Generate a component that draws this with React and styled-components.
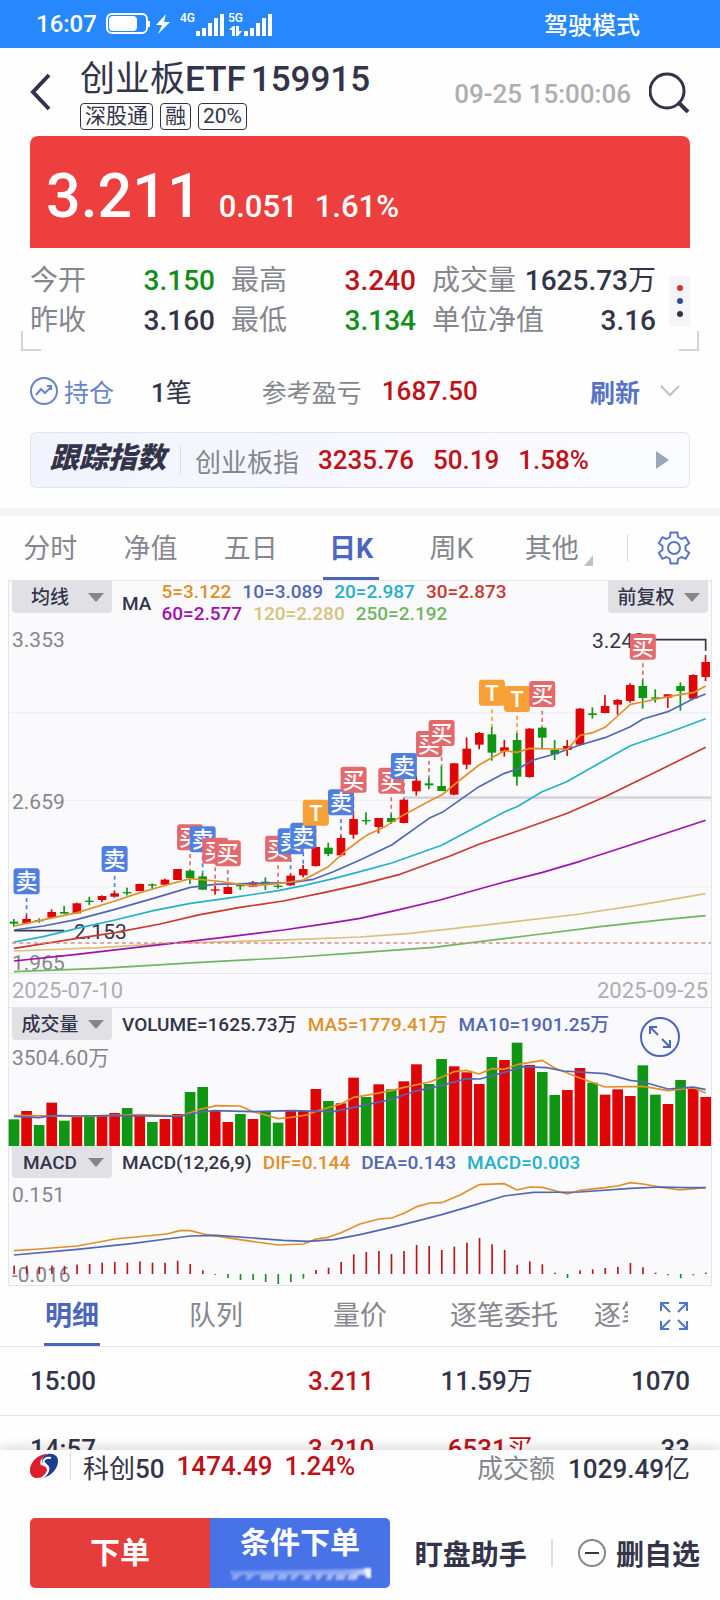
import styled, { createGlobalStyle } from "styled-components";

const COLORS = {
  dark: "#33344a",
  grey: "#85868e",
  light: "#adaeb4",
  red: "#c01018",
  green: "#0f8f18",
  link: "#4c66bd",
  line: "#e4e5ea",
  up: "#df0406",
  down: "#0f9612",
};

const MA_COLORS = {
  orange: "#e0902a",
  blue: "#5167b4",
  cyan: "#25b0cc",
  red: "#c8392f",
  purple: "#9f12b0",
  tan: "#d6c27c",
  green: "#72b560",
};

const GlobalStyle = createGlobalStyle`
  * {
    box-sizing: border-box;
  }
  body {
    margin: 0;
    background: #fefefe;
    color: ${COLORS.dark};
    font-family: Roboto, "Noto Sans CJK SC", sans-serif;
    font-weight: 500;
  }
  button, select {
    font: inherit;
    color: inherit;
    border: 0;
    padding: 0;
    background: none;
  }
  svg {
    display: block;
    flex-shrink: 0;
  }
`;

const Page = styled.main`
  display: flex;
  flex-direction: column;
  height: 100vh;
  overflow: hidden;
  & > * {
    flex-shrink: 0;
  }
`;

const Regular = styled.span`
  font-weight: 400;
`;

const StatusBar = styled.div`
  display: flex;
  align-items: center;
  justify-content: space-between;
  height: 48px;
  padding: 0 80px 2px 36px;
  background: #2688fc;
  color: #fff;
  font-size: 24px;
`;

const StatusGroup = styled.div`
  display: flex;
  align-items: center;
  gap: 8px;
  padding-top: 2px;
`;

const Header = styled.header`
  display: flex;
  align-items: center;
  height: 88px;
  padding: 0 30px;
`;

const IconButton = styled.button`
  display: grid;
  place-items: center;
  flex-shrink: 0;
`;

const TitleBlock = styled.div`
  flex: 1;
  padding: 2px 0 0 29px;
`;

const Title = styled.h1`
  display: flex;
  gap: 5px;
  margin: 0;
  font-size: 35px;
  line-height: 46px;
  font-weight: 500;
  white-space: nowrap;
`;

const Tags = styled.div`
  display: flex;
  gap: 7px;
`;

const Tag = styled.span`
  border: 1px solid ${COLORS.dark};
  border-radius: 4px;
  padding: 0 4px;
  font-size: 21px;
  line-height: 25px;
  font-weight: 400;
`;

const Timestamp = styled.time`
  margin-right: 18px;
  padding-top: 3px;
  color: ${COLORS.light};
  font-size: 26px;
`;

const PriceCard = styled.section`
  display: flex;
  align-items: baseline;
  gap: 17px;
  height: 112px;
  margin: 0 30px;
  padding: 24px 16px 0;
  border-radius: 8px 8px 0 0;
  background: #ed3f3e;
  color: #fff;
  font-size: 31px;
`;

const Price = styled.strong`
  font-size: 61px;
  line-height: 72px;
  font-weight: 500;
`;

const Stats = styled.section`
  position: relative;
  display: flex;
  align-items: center;
  gap: 13px;
  height: 103px;
  margin: 0 21px;
  padding: 13px 9px 10px;
  &::before,
  &::after {
    content: "";
    position: absolute;
    bottom: 0;
    width: 18px;
    height: 18px;
    border-bottom: 2px solid #d3d3d8;
  }
  &::before {
    left: 0;
    border-left: 2px solid #d3d3d8;
  }
  &::after {
    right: 0;
    border-right: 2px solid #d3d3d8;
  }
`;

const StatGrid = styled.dl`
  display: grid;
  flex: 1;
  grid-template-columns: 185fr 185fr 224fr;
  column-gap: 16px;
  margin: 0;
  font-size: 28px;
  line-height: 40px;
`;

const Stat = styled.div`
  display: flex;
  justify-content: space-between;
  white-space: nowrap;
  dt {
    color: ${COLORS.grey};
    font-weight: 400;
  }
  dd {
    margin: 0;
    color: ${(props) => props.$color || COLORS.dark};
  }
`;

const MoreButton = styled.button`
  display: grid;
  align-content: center;
  justify-items: center;
  gap: 7px;
  width: 21px;
  height: 50px;
  background: #f5f5f8;
`;

const Dot = styled.span`
  width: 6px;
  height: 6px;
  border-radius: 50%;
  background: ${(props) => props.$color};
`;

const Holding = styled.section`
  display: flex;
  align-items: center;
  height: 81px;
  padding: 0 40px 2px 30px;
  font-size: 26px;
  white-space: nowrap;
`;

const HoldingLink = styled.a`
  display: flex;
  align-items: center;
  gap: 6px;
  color: #6a84cb;
  font-size: 25px;
  font-weight: 400;
  text-decoration: none;
`;

const HoldingCount = styled.span`
  margin: 0 70px 0 37px;
`;

const Muted = styled.span`
  color: ${COLORS.grey};
  font-size: ${(props) => props.$size || 25}px;
  font-weight: 400;
`;

const Profit = styled.span`
  flex: 1;
  margin-left: 20px;
  color: ${COLORS.red};
`;

const RefreshButton = styled.button`
  display: flex;
  align-items: center;
  gap: 20px;
  color: #5872c6;
  font-size: 25px;
  font-weight: 700;
`;

const IndexLink = styled.a`
  display: flex;
  align-items: center;
  height: 56px;
  margin: 0 30px 20px;
  padding: 0 20px 0 19px;
  border: 1px solid #dfe4f0;
  border-radius: 6px;
  background: linear-gradient(90deg, #f1f4fd, #fbfcff);
  color: ${COLORS.red};
  font-size: 26px;
  text-decoration: none;
  white-space: nowrap;
`;

const IndexTag = styled.strong`
  color: ${COLORS.dark};
  font-size: 29px;
  line-height: 50px;
  padding-bottom: 4px;
  font-weight: 900;
  font-style: italic;
`;

const Divider = styled.span`
  width: ${(props) => props.$width || 1}px;
  height: 28px;
  margin: ${(props) => props.$margin || "0 14px"};
  flex-shrink: 0;
  background: #dcdde2;
`;

const IndexValues = styled.span`
  display: flex;
  flex: 1;
  gap: 19px;
  margin-left: 19px;
`;

const Band = styled.div`
  height: 8px;
  background: #f5f5f6;
`;

const Tabs = styled.nav`
  display: flex;
  align-items: center;
  height: ${(props) => props.$height}px;
  border-bottom: ${(props) => (props.$line ? `1px solid ${COLORS.line}` : 0)};
`;

const TabList = styled.div`
  display: flex;
  flex: 1;
  height: 100%;
  overflow: hidden;
`;

const Tab = styled.button`
  position: relative;
  flex: ${(props) => (props.$basis ? `0 0 ${props.$basis}` : 1)};
  height: 100%;
  padding-bottom: ${(props) => (props.$basis ? 6 : 4)}px;
  color: ${(props) => (props.$active ? COLORS.link : COLORS.grey)};
  font-size: 27px;
  font-weight: ${(props) => (props.$active ? 700 : 400)};
  white-space: nowrap;
  &::after {
    content: "";
    display: ${(props) => (props.$active ? "block" : "none")};
    position: absolute;
    left: 50%;
    bottom: 0;
    width: 56px;
    height: 3px;
    margin-left: -28px;
    background: ${COLORS.link};
  }
`;

const Corner = styled.span`
  position: absolute;
  right: 9px;
  bottom: 14px;
  border-left: 9px solid transparent;
  border-bottom: 11px solid #c2c2c6;
`;

const TabAction = styled(IconButton)`
  width: 92px;
`;

const Chart = styled.section`
  margin: 0 8px;
  border: 1px solid ${COLORS.line};
  background: #fafafc;
`;

const Panel = styled.div`
  position: relative;
  border-top: ${(props) => (props.$line ? `1px solid ${COLORS.line}` : 0)};
`;

const PanelHead = styled.div`
  display: flex;
  align-items: center;
  height: ${(props) => props.$height || 33}px;
  padding: 0 3px;
  gap: 10px;
  font-size: 19px;
  white-space: nowrap;
`;

const Picker = styled.label`
  display: grid;
  align-self: flex-start;
  align-items: center;
  width: 100px;
  height: 32px;
  border-radius: 0 0 4px 4px;
  background: #e1e1e5;
  & > * {
    grid-area: 1 / 1;
  }
  select {
    width: 100%;
    height: 100%;
    padding: 0 24px 0 0;
    appearance: none;
    text-align: center;
    text-align-last: center;
  }
  svg {
    justify-self: end;
    margin-right: 8px;
    pointer-events: none;
  }
`;

const Legend = styled.div`
  display: flex;
  flex: 1;
  flex-wrap: wrap;
  column-gap: 11px;
  line-height: 22px;
`;

const MaLegend = styled(Legend)`
  padding-right: 90px;
`;

const LegendItem = styled.span`
  color: ${(props) => props.$color || COLORS.dark};
`;

const Spacer = styled.span`
  flex: 1;
`;

const Plot = styled.svg`
  width: 100%;
  height: auto;
  overflow: visible;
  text {
    font-size: 21px;
    font-weight: 400;
    fill: ${COLORS.grey};
  }
  .mark {
    font-size: 22px;
    font-weight: 500;
    fill: #fff;
    text-anchor: middle;
  }
  .peak {
    fill: ${COLORS.dark};
  }
`;

const DateAxis = styled.div`
  display: flex;
  justify-content: space-between;
  padding: 0 3px;
  border-top: 1px solid ${COLORS.line};
  color: ${COLORS.light};
  font-size: 22px;
  line-height: 33px;
  font-weight: 400;
`;

const ExpandButton = styled(IconButton)`
  position: absolute;
  top: 9px;
  right: 31px;
  width: 40px;
  height: 40px;
  border: 2px solid ${COLORS.link};
  border-radius: 50%;
`;

const TradeArea = styled.div`
  flex: 1 1 0;
  min-height: 0;
  overflow: hidden;
`;

const TradeTable = styled.table`
  width: 100%;
  border-collapse: collapse;
  table-layout: fixed;
  font-size: 26px;
  td {
    height: 68px;
    padding: 0;
    border-bottom: 1px solid ${COLORS.line};
    line-height: 30px;
    text-align: right;
  }
  td:first-child {
    width: 25%;
    padding-left: 30px;
    text-align: left;
  }
  td:nth-child(2) {
    width: 27%;
    color: ${COLORS.red};
  }
  td:nth-child(3) {
    width: 22%;
  }
  td:last-child {
    padding-right: 30px;
  }
`;

const Volume = styled.td`
  color: ${(props) => (props.$buy ? COLORS.red : COLORS.dark)};
`;

const Footer = styled.footer`
  position: relative;
  height: 150px;
  background: #fefefe;
  box-shadow: 0 -4px 10px rgba(0, 0, 0, 0.12);
`;

const Ticker = styled.div`
  display: flex;
  align-items: center;
  height: 32px;
  padding: 0 30px;
  font-size: 26px;
  white-space: nowrap;
`;

const TickerValue = styled.span`
  margin-left: 12px;
  color: ${COLORS.red};
`;

const Turnover = styled.span`
  margin-left: 13px;
`;

const Actions = styled.div`
  display: flex;
  align-items: center;
  justify-content: space-between;
  padding: 36px 20px 0 30px;
`;

const OrderButtons = styled.div`
  display: flex;
  flex: 0 0 50vw;
  height: 70px;
  border-radius: 5px;
  overflow: hidden;
`;

const OrderButton = styled.button`
  display: flex;
  flex: 1 1 0;
  flex-direction: column;
  align-items: center;
  justify-content: center;
  gap: 4px;
  background: ${(props) => props.$color};
  color: #fff;
  font-size: 30px;
  line-height: 38px;
  font-weight: 700;
`;

const TextButton = styled.button`
  display: flex;
  align-items: center;
  gap: 9px;
  font-size: 28px;
  font-weight: 700;
  white-space: nowrap;
`;

const STATS = [
  { label: "今开", value: "3.150", color: COLORS.green },
  { label: "最高", value: "3.240", color: COLORS.red },
  { label: "成交量", value: "1625.73", unit: "万" },
  { label: "昨收", value: "3.160" },
  { label: "最低", value: "3.134", color: COLORS.green },
  { label: "单位净值", value: "3.16" },
];

const PERIODS = ["分时", "净值", "五日", "日K", "周K", "其他"];
const DETAILS = ["明细", "队列", "量价", "逐笔委托", "逐笔成交"];

const MA_LEGEND = [
  ["5=3.122", MA_COLORS.orange],
  ["10=3.089", MA_COLORS.blue],
  ["20=2.987", MA_COLORS.cyan],
  ["30=2.873", MA_COLORS.red],
  ["60=2.577", MA_COLORS.purple],
  ["120=2.280", MA_COLORS.tan],
  ["250=2.192", MA_COLORS.green],
];

const TRADES = [
  { time: "15:00", price: "3.211", volume: "11.59", unit: "万", count: "1070" },
  { time: "14:57", price: "3.210", volume: "6531", unit: "买", count: "33", buy: true },
];

// r = rising, g = falling, one letter per trading day
const DAYS = "grgrgrgrrgrgrrggrrgrggrrrgrrgrgrrggrrrgrgrggrrgrrrggrgrr";

// body top, body bottom, high, low in chart units (3 units per pixel)
const CANDLES = [
  [905, 911, 897, 920], [897, 910, 884, 912], [900, 904, 895, 908], [876, 893, 868, 895],
  [876, 881, 858, 882], [850, 880, 848, 882], [842, 846, 830, 855], [828, 840, 826, 846],
  [820, 830, 812, 833], [816, 820, 803, 826], [792, 813, 791, 813], [793, 797, 790, 806],
  [779, 794, 776, 794], [747, 780, 747, 780], [752, 774, 750, 792], [769, 809, 758, 810],
  [808, 812, 798, 824], [801, 822, 801, 822], [795, 799, 790, 810], [787, 800, 783, 800],
  [785, 789, 772, 810], [797, 801, 790, 806], [767, 796, 760, 798], [747, 766, 735, 772],
  [681, 738, 681, 740], [683, 702, 668, 708], [654, 706, 646, 710], [597, 644, 584, 656],
  [600, 604, 577, 614], [594, 621, 594, 640], [594, 606, 582, 612], [539, 609, 537, 610],
  [482, 514, 468, 527], [490, 496, 472, 508], [498, 513, 437, 513], [430, 524, 429, 526],
  [386, 434, 352, 448], [339, 374, 336, 388], [343, 398, 320, 422], [382, 394, 360, 410],
  [360, 470, 338, 497], [326, 471, 324, 473], [323, 353, 320, 388], [390, 403, 360, 420],
  [378, 390, 360, 408], [266, 374, 264, 378], [280, 285, 262, 296], [258, 279, 225, 280],
  [240, 254, 237, 284], [195, 243, 190, 248], [198, 234, 180, 266], [232, 236, 208, 248],
  [223, 233, 222, 264], [198, 213, 187, 272], [165, 236, 163, 238], [126, 171, 105, 183],
];

const MARKS = [
  [1, "卖", 784], [8, "卖", 717], [14, "买", 652], [15, "卖", 658], [16, "买", 692],
  [17, "买", 700], [21, "买", 686], [22, "卖", 664], [23, "卖", 647], [24, "T", 578],
  [26, "卖", 547], [27, "买", 479], [30, "买", 482], [31, "卖", 438], [33, "买", 372],
  [34, "买", 339], [38, "T", 218], [40, "T", 237], [42, "买", 222], [50, "买", 80],
];

const MARK_COLORS = { 买: "#e4696c", 卖: "#4f7fe0", T: "#f6a035" };

const PRICE_LINES = [
  ["green", "42,1055 300,1045 600,1027 850,1014 1080,998 1300,982 1600,945 1800,920 2000,898 2117,887"],
  ["tan", "42,993 300,983 500,970 720,964 900,958 1080,951 1230,940 1500,910 1740,882 1930,853 2117,821"],
  ["purple", "42,1023 230,1003 430,980 646,955 850,930 1000,908 1080,895 1185,872 1320,840 1513,786 1625,758 1740,724 1891,675 2117,601"],
  ["red", "42,985 232,955 345,938 480,912 600,884 720,862 850,843 985,815 1080,794 1200,763 1350,708 1437,673 1551,634 1702,580 1815,530 1929,475 2117,382"],
  ["cyan", "42,966 130,950 232,925 345,900 460,872 571,850 700,832 835,812 910,797 1000,776 1080,755 1175,729 1325,676 1400,636 1513,576 1551,560 1625,516 1700,485 1815,420 1891,377 2004,338 2117,296"],
  ["blue", "42,930 130,918 232,898 345,868 460,835 571,802 646,793 760,790 872,788 940,778 1000,755 1080,720 1175,675 1287,595 1330,575 1437,500 1513,460 1551,448 1600,420 1664,402 1740,375 1815,353 1891,320 1929,297 2004,275 2080,236 2117,222"],
  ["orange", "42,918 118,902 232,878 345,843 420,818 500,795 571,776 650,783 720,793 760,797 835,791 910,780 985,740 1040,690 1080,660 1100,646 1155,620 1212,584 1287,544 1325,525 1380,480 1437,435 1513,392 1551,397 1589,385 1664,387 1702,388 1740,346 1778,338 1815,322 1853,288 1891,253 1929,246 2004,230 2080,218 2117,198"],
];

const VOLUMES = [
  358, 333, 375, 308, 362, 350, 350, 346, 339, 324, 346, 366, 357, 342, 276, 261, 333, 366, 342,
  357, 336, 368, 331, 333, 267, 303, 310, 233, 291, 253, 268, 244, 193, 252, 177, 199, 217, 252,
  171, 180, 128, 195, 216, 285, 270, 204, 248, 284, 268, 288, 196, 284, 312, 240, 265, 291,
];

const VOLUME_LINES = [
  ["orange", "42,346 232,349 420,344 540,348 600,328 650,317 720,318 760,335 835,356 872,352 920,345 960,330 1023,312 1061,292 1110,284 1175,272 1212,262 1290,246 1362,215 1400,211 1437,222 1475,206 1513,208 1551,194 1627,181 1664,204 1740,234 1815,261 1930,259 2004,272 2080,263 2117,279"],
  ["blue", "42,349 118,353 160,346 232,348 345,347 540,349 571,342 640,332 760,335 872,332 1000,335 1061,322 1110,312 1175,298 1240,275 1325,256 1400,236 1440,237 1513,217 1570,200 1640,203 1690,213 1815,221 1891,241 1930,246 2004,267 2080,261 2117,269"],
];

const MACD_ZERO = 822;
const MACD = [
  797, 797, 800, 797, 798, 794, 792, 788, 786, 788, 784, 788, 788, 782, 792, 811, 825, 834, 840,
  840, 846, 852, 846, 836, 810, 803, 786, 763, 756, 753, 762, 753, 735, 738, 750, 740, 728, 714,
  733, 750, 795, 784, 793, 818, 834, 811, 808, 804, 801, 789, 802, 818, 826, 835, 826, 818,
];

const MACD_LINES = [
  ["orange", "42,752 118,747 232,738 345,717 500,702 540,692 571,692 610,702 680,713 760,725 835,735 910,732 948,717 985,712 1023,698 1080,672 1137,657 1175,654 1212,640 1250,620 1290,609 1325,608 1380,585 1437,554 1513,551 1551,570 1589,561 1627,562 1702,582 1740,571 1815,563 1853,558 1891,548 1929,552 1985,562 2040,570 2117,563"],
  ["blue", "42,765 232,748 400,730 500,717 571,708 650,706 760,714 850,721 925,724 1000,719 1080,704 1200,676 1325,644 1400,622 1513,588 1600,577 1740,576 1891,565 1985,561 2050,563 2117,563"],
];

const UNIT = "scale(0.33333)";
const dayX = (i) => 42 + i * 37.73;
const dayColor = (i) => (DAYS[i] === "r" ? COLORS.up : COLORS.down);

function Lines({ data }) {
  return data.map(([color, points]) => (
    <polyline
      key={color}
      points={points}
      fill="none"
      stroke={MA_COLORS[color]}
      strokeWidth="5"
      strokeLinejoin="round"
    />
  ));
}

function PricePlot() {
  return (
    <Plot viewBox="9 5 702 348" role="img" aria-label="日K">
      <g transform={UNIT}>
        <path d="M27 278H2133M27 541H2133M27 801H2133" stroke="#eeeef2" strokeWidth="3" />
        <path d="M1212 533H2133" stroke="#d6d6da" strokeWidth="8" />
      </g>
      <text x="12" y="27">3.353</text>
      <text x="12" y="189">2.659</text>
      <text x="12" y="350">1.965</text>
      <text x="74" y="319" className="peak">2.153</text>
      <text x="592" y="28" className="peak">3.240</text>
      <g transform={UNIT}>
        <path d="M42 932H192M1965 59H2117V92" fill="none" stroke={COLORS.dark} strokeWidth="5" />
        {CANDLES.map(([top, bottom, high, low], i) => (
          <g key={i} fill={dayColor(i)}>
            <rect x={dayX(i) - 13} y={top} width="26" height={bottom - top} />
            <rect x={dayX(i) - 3} y={high} width="5" height={low - high} />
          </g>
        ))}
        <Lines data={PRICE_LINES} />
        <path d="M36 969H2133" stroke="#d68f86" strokeWidth="4" strokeDasharray="12 10" />
        {MARKS.map(([i, type, y]) => (
          <path
            key={i}
            d={`M${dayX(i)} ${y + 50}V${Math.max(CANDLES[i][2], y + 80)}`}
            stroke={MARK_COLORS[type]}
            strokeWidth="5"
            strokeDasharray="12 10"
          />
        ))}
      </g>
      {MARKS.map(([i, type, y]) => (
        <g key={i} transform={`translate(${dayX(i) / 3} ${y / 3})`}>
          <rect x="-13" y="-13" width="26" height="26" rx="3" fill={MARK_COLORS[type]} />
          <text y="8" className="mark">{type}</text>
        </g>
      ))}
    </Plot>
  );
}

function VolumePlot() {
  return (
    <Plot viewBox="9 41 702 105" role="img" aria-label="成交量">
      <text x="12" y="65">3504.60万</text>
      <g transform={UNIT}>
        {VOLUMES.map((top, i) => (
          <rect key={i} x={dayX(i) - 16} y={top} width="32" height={438 - top} fill={dayColor(i)} />
        ))}
        <Lines data={VOLUME_LINES} />
      </g>
    </Plot>
  );
}

function MacdPlot() {
  return (
    <Plot viewBox="9 179 702 106" role="img" aria-label="MACD">
      <text x="12" y="202">0.151</text>
      <text x="12" y="282">-0.016</text>
      <g transform={UNIT}>
        {MACD.map((value, i) => (
          <rect
            key={i}
            x={dayX(i) - 2}
            y={Math.min(value, MACD_ZERO)}
            width="5"
            height={Math.abs(value - MACD_ZERO)}
            fill={value < MACD_ZERO ? "#b3181c" : "#1d8a2c"}
          />
        ))}
        <Lines data={MACD_LINES} />
      </g>
    </Plot>
  );
}

function Select({ label, options }) {
  return (
    <Picker>
      <select aria-label={label} defaultValue={options[0]}>
        {options.map((option) => (
          <option key={option}>{option}</option>
        ))}
      </select>
      <svg width="16" height="9" viewBox="0 0 16 9">
        <path d="M0 0H16L8 9Z" fill="#85868c" />
      </svg>
    </Picker>
  );
}

function StatusIcons() {
  return (
    <svg width="168" height="26" viewBox="0 0 168 26" fill="#fff">
      <rect x="2" y="3" width="40" height="19" rx="5" fill="none" stroke="#fff" strokeWidth="2" />
      <rect x="4" y="5" width="28" height="15" rx="4" />
      <path d="M43 10H45V16H43ZM61 3L51 14H57L53 23L65 11H59Z" />
      <path d="M91 20h4v5h-4zM97 17h4v8h-4zM103 12h4v13h-4zM109 7h4v18h-4zM115 3h4v22h-4z" />
      <path d="M139 20h4v5h-4zM145 17h4v8h-4zM151 12h4v13h-4zM157 7h4v18h-4zM163 3h4v22h-4z" />
      <path d="M124 19L128 15H130V25H127V19ZM131 15H134V20H137L133 25H131Z" />
      <text x="75" y="11" fontSize="12">4G</text>
      <text x="123" y="11" fontSize="12">5G</text>
    </svg>
  );
}

function GearIcon() {
  return (
    <svg width="34" height="34" viewBox="0 0 34 34" fill="none" stroke="#5876bd" strokeWidth="2" strokeLinejoin="round">
      <path d="M13 6L13.500 1.500H20.500L21 6L24.500 8L28.700 6.200L32.200 12.300L28.500 15V19L32.200 21.700L28.700 27.800L24.500 26L21 28L20.500 32.500H13.500L13 28L9.500 26L5.300 27.800L1.800 21.700L5.500 19V15L1.800 12.300L5.300 6.200L9.500 8Z" />
      <circle cx="17" cy="17" r="6" />
    </svg>
  );
}

function FullscreenIcon() {
  return (
    <svg width="30" height="30" viewBox="0 0 30 30" fill="none" stroke="#4f76c8" strokeWidth="2">
      <path d="M2 10V2H10M2 2L11 11M20 2H28V10M28 2L19 11M2 20V28H10M2 28L11 19M20 28H28V20M28 28L19 19" />
    </svg>
  );
}

function BrandIcon() {
  return (
    <svg width="28" height="26" viewBox="0 0 28 26">
      <path d="M18 1C9 1 2 7 0 15C-1 22 3 25 7 25C12 25 17 22 17 17C17 13 13 13 11 12C9 10 11 4 18 1Z" fill="#dc1d2b" />
      <path d="M18 1C24 0 28 3 28 8C28 16 21 23 13 25C18 22 20 17 17 13C15 11 12 11 12 8C12 4 15 2 18 1Z" fill="#1c3f92" />
      <path d="M21 5C16 4 12 7 14 10C16 12 20 13 18 18C17 21 15 23 12 25" fill="none" stroke="#fff" strokeWidth="2" />
    </svg>
  );
}

function PromoShine() {
  return (
    <svg width="144" height="16" viewBox="0 0 144 16">
      <defs>
        <linearGradient id="shine" x1="0" x2="1">
          <stop offset="0" stopColor="#8aa6f2" />
          <stop offset="0.85" stopColor="#a6bbf6" />
          <stop offset="1" stopColor="#fff" />
        </linearGradient>
        <filter id="soft">
          <feGaussianBlur stdDeviation="0.9" />
        </filter>
      </defs>
      <g fill="url(#shine)" filter="url(#soft)">
        <path d="M2 5L142 3L141 9H3Z" opacity="0.75" />
        <path d="M5 8H14L8 14H4ZM19 8H28L21 14H18ZM33 8H48L45 14H32ZM51 8H60L58 14H49ZM64 8H72L66 14H62ZM76 8H84L82 14H75ZM88 8H96L91 14H88ZM100 8H106L103 14H98ZM109 8H118L116 14H107ZM121 8H131L128 14H119ZM136 2H143V12H138Z" />
      </g>
    </svg>
  );
}

function App() {
  return (
    <Page>
      <GlobalStyle />
      <StatusBar>
        <StatusGroup>
          16:07
          <StatusIcons />
        </StatusGroup>
        <span>驾驶模式</span>
      </StatusBar>
      <Header>
        <IconButton aria-label="返回">
          <svg width="21" height="38" viewBox="0 0 21 38" fill="none" stroke={COLORS.dark} strokeWidth="4">
            <path d="M19 2L3 19L19 36" />
          </svg>
        </IconButton>
        <TitleBlock>
          <Title>
            <span>
              <Regular>创业板</Regular>ETF
            </span>
            <span>159915</span>
          </Title>
          <Tags>
            <Tag>深股通</Tag>
            <Tag>融</Tag>
            <Tag>20%</Tag>
          </Tags>
        </TitleBlock>
        <Timestamp>09-25 15:00:06</Timestamp>
        <IconButton aria-label="搜索">
          <svg width="41" height="41" viewBox="0 0 41 41" fill="none" stroke={COLORS.dark} strokeWidth="3">
            <circle cx="18" cy="19" r="17" />
            <path d="M29 30L39 40" strokeWidth="4" />
          </svg>
        </IconButton>
      </Header>
      <PriceCard>
        <Price>3.211</Price>
        <span>0.051</span>
        <span>1.61%</span>
      </PriceCard>
      <Stats>
        <StatGrid>
          {STATS.map((item) => (
            <Stat key={item.label} $color={item.color}>
              <dt>{item.label}</dt>
              <dd>
                {item.value}
                <Regular>{item.unit}</Regular>
              </dd>
            </Stat>
          ))}
        </StatGrid>
        <MoreButton aria-label="更多">
          <Dot $color="#c23a3c" />
          <Dot $color="#2c4f93" />
          <Dot $color={COLORS.dark} />
        </MoreButton>
      </Stats>
      <Holding>
        <HoldingLink href="#holding">
          <svg width="28" height="28" viewBox="0 0 28 28" fill="none" stroke="#6a84cb" strokeWidth="2">
            <circle cx="14" cy="14" r="13" />
            <path d="M6 18L11 12L15 16L21 10M17 9H21V13" />
          </svg>
          持仓
        </HoldingLink>
        <HoldingCount>
          1<Regular>笔</Regular>
        </HoldingCount>
        <Muted>参考盈亏</Muted>
        <Profit>1687.50</Profit>
        <RefreshButton>
          刷新
          <svg width="20" height="12" viewBox="0 0 20 12" fill="none" stroke="#bfc0c6" strokeWidth="2">
            <path d="M1 1L10 10L19 1" />
          </svg>
        </RefreshButton>
      </Holding>
      <IndexLink href="#index">
        <IndexTag>跟踪指数</IndexTag>
        <Divider />
        <Muted $size={26}>创业板指</Muted>
        <IndexValues>
          <span>3235.76</span>
          <span>50.19</span>
          <span>1.58%</span>
        </IndexValues>
        <svg width="13" height="18" viewBox="0 0 13 18">
          <path d="M0 0L13 9L0 18Z" fill="#9ba6bb" />
        </svg>
      </IndexLink>
      <Band />
      <Tabs $height={64}>
        <TabList>
          {PERIODS.map((name) => (
            <Tab key={name} $active={name === "日K"}>
              {name}
              {name === "其他" && <Corner />}
            </Tab>
          ))}
        </TabList>
        <Divider $margin="0 0 0 25px" />
        <TabAction aria-label="设置">
          <GearIcon />
        </TabAction>
      </Tabs>
      <Chart>
        <Panel>
          <PanelHead $height={44}>
            <Select label="指标" options={["均线", "BOLL"]} />
            <LegendItem>MA</LegendItem>
            <MaLegend>
              {MA_LEGEND.map(([text, color]) => (
                <LegendItem key={text} $color={color}>
                  {text}
                </LegendItem>
              ))}
            </MaLegend>
            <Select label="复权" options={["前复权", "不复权"]} />
          </PanelHead>
          <PricePlot />
        </Panel>
        <DateAxis>
          <span>2025-07-10</span>
          <span>2025-09-25</span>
        </DateAxis>
        <Panel $line>
          <PanelHead>
            <Select label="副图一" options={["成交量", "成交额"]} />
            <Legend>
              <LegendItem>VOLUME=1625.73万</LegendItem>
              <LegendItem $color={MA_COLORS.orange}>MA5=1779.41万</LegendItem>
              <LegendItem $color={MA_COLORS.blue}>MA10=1901.25万</LegendItem>
            </Legend>
          </PanelHead>
          <VolumePlot />
          <ExpandButton aria-label="放大">
            <svg width="24" height="24" viewBox="0 0 24 24" fill="none" stroke={COLORS.link} strokeWidth="2">
              <path d="M2 9V2H9M2 2L10 10M22 15V22H15M22 22L14 14" />
            </svg>
          </ExpandButton>
        </Panel>
        <Panel>
          <PanelHead>
            <Select label="副图二" options={["MACD", "KDJ"]} />
            <Legend>
              <LegendItem>MACD(12,26,9)</LegendItem>
              <LegendItem $color={MA_COLORS.orange}>DIF=0.144</LegendItem>
              <LegendItem $color={MA_COLORS.blue}>DEA=0.143</LegendItem>
              <LegendItem $color={MA_COLORS.cyan}>MACD=0.003</LegendItem>
            </Legend>
          </PanelHead>
          <MacdPlot />
        </Panel>
      </Chart>
      <Tabs $height={61} $line>
        <TabList>
          {DETAILS.map((name) => (
            <Tab key={name} $active={name === "明细"} $basis="144px">
              {name}
            </Tab>
          ))}
        </TabList>
        <TabAction aria-label="全屏">
          <FullscreenIcon />
        </TabAction>
      </Tabs>
      <TradeArea>
        <TradeTable>
          <tbody>
            {TRADES.map((trade) => (
              <tr key={trade.time}>
                <td>{trade.time}</td>
                <td>{trade.price}</td>
                <Volume $buy={trade.buy}>
                  {trade.volume}
                  <Regular>{trade.unit}</Regular>
                </Volume>
                <td>{trade.count}</td>
              </tr>
            ))}
          </tbody>
        </TradeTable>
      </TradeArea>
      <Footer>
        <Ticker>
          <BrandIcon />
          <Divider $margin="0 12px" />
          <span>
            <Regular>科创</Regular>50
          </span>
          <TickerValue>1474.49</TickerValue>
          <TickerValue>1.24%</TickerValue>
          <Spacer />
          <Muted $size={26}>成交额</Muted>
          <Turnover>
            1029.49<Regular>亿</Regular>
          </Turnover>
        </Ticker>
        <Actions>
          <OrderButtons>
            <OrderButton $color="#e43d3c">下单</OrderButton>
            <OrderButton $color="#4873e6">
              条件下单
              <PromoShine />
            </OrderButton>
          </OrderButtons>
          <TextButton>盯盘助手</TextButton>
          <Divider $width={2} $margin="0" />
          <TextButton>
            <svg width="29" height="29" viewBox="0 0 29 29" fill="none" stroke={COLORS.grey} strokeWidth="2">
              <circle cx="14" cy="14" r="13" />
              <path d="M7 14H21" stroke={COLORS.dark} />
            </svg>
            删自选
          </TextButton>
        </Actions>
      </Footer>
    </Page>
  );
}

export default App;
